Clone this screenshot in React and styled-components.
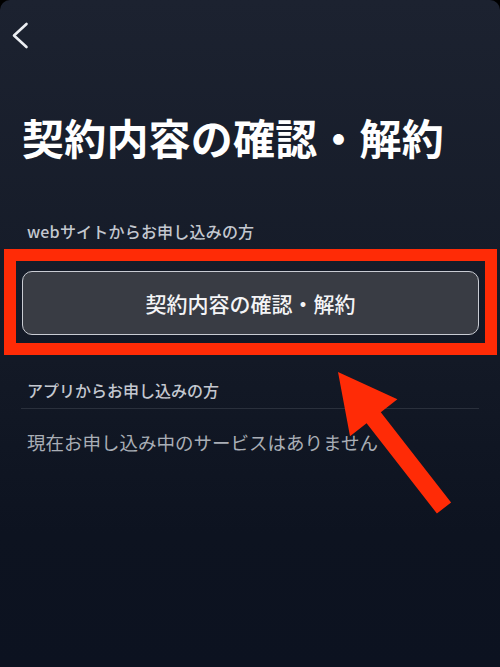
import React from "react";
import styled, { createGlobalStyle } from "styled-components";

const GlobalStyle = createGlobalStyle`
  html, body {
    margin: 0;
    padding: 0;
    background: #000;
  }
  body {
    font-family: "Noto Sans CJK JP", "Noto Sans", sans-serif;
  }
`;

const Page = styled.div`
  position: relative;
  min-height: 667px;
  overflow: hidden;
  border-radius: 10px 10px 0 0;
  background: linear-gradient(180deg, #1c2230 0%, #151b28 45%, #0d1320 80%, #0c1220 100%);
  color: #fff;
`;

const NavBar = styled.div`
  height: 60px;
  box-sizing: border-box;
  padding: 22px 0 0 11px;
`;

const BackButton = styled.button`
  display: block;
  padding: 0;
  border: 0;
  background: none;
  cursor: pointer;
  svg {
    display: block;
  }
`;

const Title = styled.h1`
  margin: 49px 0 55px;
  padding-left: 22px;
  font-size: 42px;
  line-height: 56px;
  font-weight: 700;
  letter-spacing: 0.2px;
  color: #ffffff;
`;

const SectionLabel = styled.div`
  padding-left: 27px;
  font-size: 16px;
  line-height: 22px;
  font-weight: 500;
  letter-spacing: 0.2px;
  color: #c4c8d0;
`;

const Highlight = styled.div`
  margin: 7px 3px 0 4px;
  border: 12px solid #ff2b06;
  padding: 10px 6px 8px;
`;

const ActionButton = styled.button`
  display: flex;
  align-items: center;
  justify-content: center;
  width: 100%;
  height: 64px;
  box-sizing: border-box;
  border: 1.5px solid #c9ccd3;
  border-radius: 10px;
  background: #393c44;
  color: #f4f4f6;
  font-family: inherit;
  font-size: 21px;
  font-weight: 500;
  cursor: pointer;
`;

const AppSection = styled.section`
  margin-top: 24px;
`;

const AppHeader = styled.div`
  margin: 0 21px;
  padding: 0 0 7px 6px;
  border-bottom: 1px solid #2a303c;
  font-size: 16px;
  line-height: 22px;
  font-weight: 500;
  color: #c4c8d0;
`;

const EmptyText = styled.p`
  margin: 20px 0 0;
  padding-left: 27px;
  font-size: 18.5px;
  line-height: 26px;
  font-weight: 400;
  color: #a9aeb6;
`;

const Pointer = styled.svg`
  position: absolute;
  left: 0;
  top: 0;
  pointer-events: none;
`;

const ChevronLeft = () => (
  <svg width="18" height="28" viewBox="0 0 18 28" fill="none">
    <path
      d="M15.5 2 L3 13.5 L15.5 25"
      stroke="#eceef2"
      strokeWidth="2.6"
      strokeLinecap="round"
      strokeLinejoin="round"
    />
  </svg>
);

export default function App() {
  return (
    <>
      <GlobalStyle />
      <Page>
        <NavBar>
          <BackButton aria-label="戻る">
            <ChevronLeft />
          </BackButton>
        </NavBar>

        <Title>契約内容の確認・解約</Title>

        <SectionLabel>webサイトからお申し込みの方</SectionLabel>
        <Highlight>
          <ActionButton>契約内容の確認・解約</ActionButton>
        </Highlight>

        <AppSection>
          <AppHeader>アプリからお申し込みの方</AppHeader>
          <EmptyText>現在お申し込み中のサービスはありません</EmptyText>
        </AppSection>

        {/* annotation arrow pointing at the button */}
        <Pointer width="500" height="667" viewBox="0 0 500 667">
          <polygon
            points="338,372 397.4,399.3 380.8,412.3 451.1,502.5 436.9,513.5 366.6,423.3 350,436.3"
            fill="#ff2b06"
          />
        </Pointer>
      </Page>
    </>
  );
}
